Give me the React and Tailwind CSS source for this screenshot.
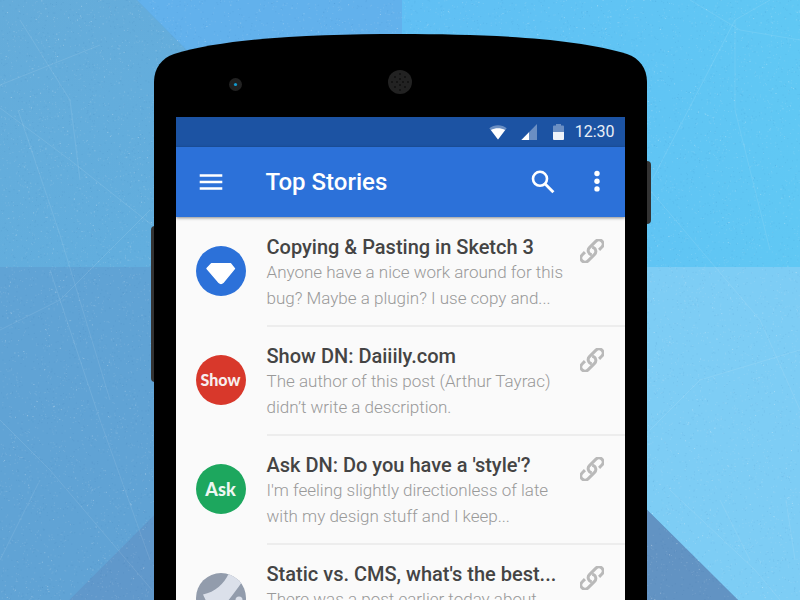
import React from "react";

const STORIES = [
  {
    kind: "sketch",
    title: "Copying & Pasting in Sketch 3",
    lines: ["Anyone have a nice work around for this", "bug? Maybe a plugin? I use copy and..."],
  },
  {
    kind: "show",
    title: "Show DN: Daiiily.com",
    lines: ["The author of this post (Arthur Tayrac)", "didn’t write a description."],
  },
  {
    kind: "ask",
    title: "Ask DN: Do you have a 'style'?",
    lines: ["I'm feeling slightly directionless of late", "with my design stuff and I keep..."],
  },
  {
    kind: "site",
    title: "Static vs. CMS, what's the best...",
    lines: ["There was a post earlier today about"],
  },
];

// Small seeded generator so the wallpaper speckle is the same on every load.
function makeRandom(seed) {
  let s = seed;
  return () => {
    s = (s * 16807) % 2147483647;
    return s / 2147483647;
  };
}

function speckle(count, seed) {
  const rnd = makeRandom(seed);
  let d = "";
  for (let i = 0; i < count; i++) {
    d += `M${(rnd() * 800).toFixed(1)} ${(rnd() * 600).toFixed(1)}h1`;
  }
  return d;
}

const LIGHT_SPECKS = speckle(14000, 77);
const BRIGHT_SPECKS = speckle(900, 913);
const DARK_SPECKS = speckle(9000, 4211);

function Wallpaper() {
  return (
    <svg
      className="absolute inset-0 h-full w-full"
      viewBox="0 0 800 600"
      preserveAspectRatio="xMidYMid slice"
      aria-hidden="true"
    >
      <defs>
        <linearGradient id="upperRight" x1="0" y1="0" x2="1" y2="0">
          <stop offset="0" stopColor="#60bff4" />
          <stop offset="1" stopColor="#60c8f4" />
        </linearGradient>
        <linearGradient id="upperLeft" x1="0" y1="0" x2="1" y2="1">
          <stop offset="0" stopColor="#65acda" />
          <stop offset="1" stopColor="#60afe0" />
        </linearGradient>
      </defs>
      <path d="M0 0H137L402 267H0Z" fill="url(#upperLeft)" />
      <path d="M137 0H402V267Z" fill="#62b1ec" />
      <path d="M402 0H800V267H402Z" fill="url(#upperRight)" />
      <path d="M402 267H800V600H738Z" fill="#7dcdf5" />
      <path d="M402 267L738 600H402Z" fill="#6293c3" />
      <path d="M402 267V600H69Z" fill="#6098cb" />
      <path d="M402 267L69 600H0V267Z" fill="#60a3d5" />
      <path d={LIGHT_SPECKS} stroke="#fff" strokeOpacity=".12" />
      <path d={BRIGHT_SPECKS} stroke="#fff" strokeOpacity=".3" />
      <path d={DARK_SPECKS} stroke="#1d5f9c" strokeOpacity=".08" />
      <g fill="none" stroke="#fff" strokeOpacity=".2" strokeWidth=".5">
        <path d="M0 108L70 160L152 225M18 110L60 235L110 400M0 85L100 45M0 330L60 300L150 210" />
        <path d="M0 420L50 470L152 590M50 270L100 420L150 560M0 560L40 480M20 20L70 100L80 180" />
        <path d="M652 180L735 20L770 0M690 0L740 30L800 40M735 20V110L770 250M650 190L760 320L800 410" />
        <path d="M670 490L755 570L780 600M720 500L750 560M786 500L795 560M650 430L700 380L800 350" />
      </g>
    </svg>
  );
}

function PhoneTop() {
  return (
    <svg className="block h-[83px] w-full" viewBox="0 0 493 83" preserveAspectRatio="none" aria-hidden="true">
      <path d="M0 83V48C0 34 8 24 20 20C72 4 160 0 246.500 0C333 0 421 4 473 20C485 24 493 34 493 48V83Z" fill="#000" />
      <circle cx="81.500" cy="50.500" r="6.500" fill="#222" />
      <circle cx="81.500" cy="50.500" r="1.600" fill="#129bd0" />
      <circle cx="246" cy="48" r="12" fill="#222" />
      <g fill="#111">
        <circle cx="246" cy="40" r="1" /><circle cx="241" cy="43" r="1" /><circle cx="251" cy="43" r="1" />
        <circle cx="246" cy="45" r="1" /><circle cx="238" cy="48" r="1" /><circle cx="243" cy="48" r="1" />
        <circle cx="249" cy="48" r="1" /><circle cx="254" cy="48" r="1" /><circle cx="246" cy="51" r="1" />
        <circle cx="241" cy="53" r="1" /><circle cx="251" cy="53" r="1" /><circle cx="246" cy="56" r="1" />
      </g>
    </svg>
  );
}

function StatusBar() {
  return (
    <div className="flex h-[30px] items-center justify-end bg-[#1c53a3] pr-2.5 text-white">
      <svg className="mr-3.5 h-4 w-[18px]" viewBox="0 0 18 16" aria-hidden="true">
        <path d="M.3 4.200C5 .2 13 .2 17.700 4.200L9 15.500Z" fill="#fff" fillOpacity=".35" />
        <path d="M1.900 6C6 3.600 12 3.600 16.100 6L9 15.500Z" fill="#fff" />
      </svg>
      <svg className="mr-4 h-4 w-4" viewBox="0 0 16 16" aria-hidden="true">
        <path d="M16 0V16H.4Z" fill="#fff" fillOpacity=".35" />
        <path d="M8 8.200V16H.4Z" fill="#fff" />
      </svg>
      <svg className="mr-[11px] h-4 w-[11px]" viewBox="0 0 11 16" aria-hidden="true">
        <path d="M3 0H8V1.500H10Q11 1.500 11 2.500V8H0V2.500Q0 1.500 1 1.500H3Z" fill="#fff" fillOpacity=".35" />
        <path d="M0 8H11V15Q11 16 10 16H1Q0 16 0 15Z" fill="#fff" fillOpacity=".93" />
      </svg>
      <span className="text-[16px] leading-5 text-[#e9eff7]">12:30</span>
    </div>
  );
}

function AppBar() {
  return (
    <header className="relative flex h-[70px] items-center bg-[#2c71d9] pl-[23px] pr-[22px] text-white shadow-[0_1px_3px_rgba(0,0,0,0.45)]">
      <button type="button" aria-label="Menu" className="mr-[43px] block">
        <svg className="block h-6 w-6" viewBox="0 0 24 24" aria-hidden="true">
          <path d="M.7 5.500h22.600M.7 12h22.600M.7 18.500h22.600" stroke="currentColor" strokeWidth="2.500" />
        </svg>
      </button>
      <h1 className="flex-1 text-[24px] font-medium leading-8">Top Stories</h1>
      <button type="button" aria-label="Search" className="mr-9 block">
        <svg className="block h-6 w-6" viewBox="0 0 24 24" fill="none" stroke="currentColor" aria-hidden="true">
          <circle cx="9" cy="8.800" r="7" strokeWidth="2.600" />
          <path d="M14.200 14L22.400 22.200" strokeWidth="2.900" />
        </svg>
      </button>
      <button type="button" aria-label="More options" className="block">
        <svg className="block h-6 w-3" viewBox="0 0 12 24" fill="currentColor" aria-hidden="true">
          <circle cx="6" cy="3.500" r="2.700" />
          <circle cx="6" cy="11.200" r="2.700" />
          <circle cx="6" cy="18.900" r="2.700" />
        </svg>
      </button>
    </header>
  );
}

function Avatar({ kind }) {
  if (kind === "show") {
    return (
      <span className="flex size-[50px] shrink-0 items-center justify-center rounded-full bg-[#d8382b] font-['Lato','Liberation_Sans',sans-serif] text-[16px] font-black text-[#f7eeee]">
        Show
      </span>
    );
  }
  if (kind === "ask") {
    return (
      <span className="flex size-[50px] shrink-0 items-center justify-center rounded-full bg-[#1da75e] font-['Lato','Liberation_Sans',sans-serif] text-[18px] font-black text-[#eef7f2]">
        Ask
      </span>
    );
  }
  if (kind === "site") {
    return (
      <svg className="size-[50px] shrink-0 rounded-full" viewBox="0 0 50 50" aria-hidden="true">
        <rect width="50" height="50" fill="#929cac" />
        <path d="M33 0L46 9C41 16 36 23 31 29L20 40L12 32L7 21.500C19 19 28 11 33 0Z" fill="#dbe0ea" />
        <circle cx="43" cy="27" r="3.500" fill="#dbe0ea" />
      </svg>
    );
  }
  return (
    <svg className="size-[50px] shrink-0 rounded-full" viewBox="0 0 50 50" aria-hidden="true">
      <rect width="50" height="50" fill="#2c71d9" />
      <path
        d="M15.500 17.800H34.500L38.500 22.600L27 36.500Q25 38.300 23 36.500L11 22.600Z"
        fill="#fff"
        stroke="#fff"
        strokeWidth="1.400"
        strokeLinejoin="round"
      />
    </svg>
  );
}

function LinkIcon() {
  return (
    <svg className="block h-6 w-6" viewBox="0 0 24 24" fill="none" stroke="currentColor" strokeWidth="3" aria-hidden="true">
      <g transform="rotate(-45 12 12)">
        <path d="M17.800 16.200H21.800A4.200 4.200 0 0 0 21.800 7.800H12.600A4.200 4.200 0 0 0 9.200 14.500" />
        <path d="M6.200 7.800H2.200A4.200 4.200 0 0 0 2.200 16.200H11.400A4.200 4.200 0 0 0 14.800 9.500" />
      </g>
    </svg>
  );
}

function Story({ story }) {
  return (
    <li className="flex h-[109px] pl-5">
      <div className="mr-[21px] pt-7">
        <Avatar kind={story.kind} />
      </div>
      <div className="flex min-w-0 flex-1 justify-between border-b-2 border-[#ededed] pr-[21px] pt-[17px]">
        <div className="min-w-0 whitespace-nowrap">
          <h2 className="text-[20px] font-medium leading-6 text-[#444]">{story.title}</h2>
          <p className="text-[17px] font-light leading-[26px] text-[#999]">
            {story.lines.map((line) => (
              <span key={line} className="block">
                {line}
              </span>
            ))}
          </p>
        </div>
        <a href="#story" aria-label={story.title} className="mt-1 h-6 text-[#b9b9b9]">
          <LinkIcon />
        </a>
      </div>
    </li>
  );
}

export default function App() {
  return (
    <main className="relative h-screen overflow-hidden bg-[#60a3d5] pt-[34px] font-['Roboto','Liberation_Sans',sans-serif]">
      <Wallpaper />
      <div className="relative mx-auto w-full max-w-[493px]">
        <span className="absolute -left-[3px] top-[192px] h-[156px] w-1.5 rounded-l-sm bg-[#333]" />
        <span className="absolute -right-1 top-[127px] h-[63px] w-1.5 rounded-r-sm bg-[#333]" />
        <div className="relative">
          <PhoneTop />
          <div className="bg-black px-[22px]">
            <StatusBar />
            <AppBar />
            <ul className="bg-[#fafafa] pt-px">
              {STORIES.map((story) => (
                <Story key={story.kind} story={story} />
              ))}
            </ul>
          </div>
        </div>
      </div>
    </main>
  );
}
